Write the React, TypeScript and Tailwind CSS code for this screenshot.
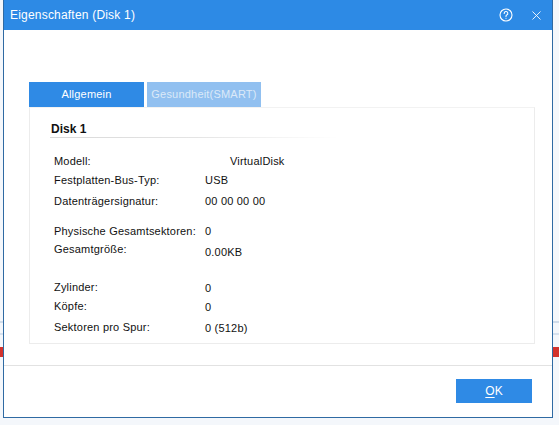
import { X } from 'lucide-react';

interface Field {
  label: string;
  value: string;
  gapBefore?: string;
  valueClass?: string;
}

const fields: Field[] = [
  { label: 'Modell:', value: 'VirtualDisk', valueClass: 'pl-[25px]' },
  { label: 'Festplatten-Bus-Typ:', value: 'USB' },
  { label: 'Datenträgersignatur:', value: '00 00 00 00', gapBefore: 'mt-[2px]' },
  { label: 'Physische Gesamtsektoren:', value: '0', gapBefore: 'mt-[11px]' },
  { label: 'Gesamtgröße:', value: '0.00KB', gapBefore: 'mt-[-1px]', valueClass: 'translate-y-[3px]' },
  { label: 'Zylinder:', value: '0', gapBefore: 'mt-[19px]', valueClass: 'translate-y-[1px]' },
  { label: 'Köpfe:', value: '0', valueClass: 'translate-y-[1px]' },
  { label: 'Sektoren pro Spur:', value: '0 (512b)', gapBefore: 'mt-[2px]', valueClass: 'translate-y-[1px]' },
];

function HelpIcon() {
  return (
    <svg width="14" height="14" viewBox="0 0 14 14" fill="none" stroke="white" strokeWidth="1.1">
      <circle cx="7" cy="7" r="6" />
      <path d="M5.2 5.4a1.8 1.8 0 1 1 2.5 1.6c-.5.25-.7.6-.7 1.1v.5" strokeLinecap="round" />
      <circle cx="7" cy="10.2" r="0.55" fill="white" stroke="none" />
    </svg>
  );
}

function SideStrip({ width }: { width: string }) {
  return (
    <div className={`${width} h-[425px] flex flex-col bg-[#f4f7fb]`}>
      <div className="h-[321px]" />
      <div className="h-[2px] bg-[#cfdbe9]" />
      <div className="h-[10px]" />
      <div className="h-[2px] bg-[#d6e1ee]" />
      <div className="h-[12px]" />
      <div className="h-[10px] bg-[#d3322c]" />
      <div className="flex-1" />
    </div>
  );
}

export default function App() {
  return (
    <div className="w-[559px] h-[425px] flex bg-[#f4f7fb] overflow-hidden" style={{ fontFamily: '"Liberation Sans", Arial, sans-serif' }}>
      <SideStrip width="w-[3px]" />
      <div className="w-[550px] h-[418px] flex flex-col bg-white border-x border-b border-[#2f6aa3]">
        {/* title bar */}
        <div className="h-[30px] bg-[#2d8ae5] flex items-center pl-[6px] pr-[8px]">
          <span className="text-white text-[12px] tracking-[0.2px]">Eigenschaften (Disk 1)</span>
          <div className="ml-auto flex items-center gap-[16px]">
            <HelpIcon />
            <X size={15} color="white" strokeWidth={1.4} />
          </div>
        </div>

        <div className="flex-1 flex flex-col pl-[25px] pr-[17px] pt-[52px]">
          {/* tabs */}
          <div className="flex gap-[3px] h-[25px] text-[11px] tracking-[0.2px]">
            <div className="w-[115px] bg-[#2f8ae5] text-white flex items-center justify-center">Allgemein</div>
            <div className="w-[114px] bg-[#91c0f0] text-[#dbe9f8] flex items-center justify-center">Gesundheit(SMART)</div>
          </div>

          {/* general panel */}
          <div className="h-[237px] border border-[#ececec] border-t-[#f2f2f2] pl-[20px] pt-[13px]">
            <div className="text-[12px] font-bold text-[#111] leading-[16px] pl-[1px]">Disk 1</div>
            <div className="h-[1px] w-[288px] bg-gradient-to-r from-[#d9d9d9] via-[#e4e4e4] to-transparent" />
            <div className="pt-[14px] pl-[4px] flex flex-col text-[11px] tracking-[0.2px] text-[#111] leading-[19px]">
              {fields.map((f) => (
                <div key={f.label} className={`flex ${f.gapBefore ?? ''}`}>
                  <span className="w-[151px]">{f.label}</span>
                  <span className={f.valueClass ?? ''}>{f.value}</span>
                </div>
              ))}
            </div>
          </div>
        </div>

        {/* footer */}
        <div className="h-[52px] border-t border-[#e2e2e2] flex items-start justify-end pr-[20px] pt-[13px]">
          <button className="w-[76px] h-[24px] bg-[#2f8ae5] text-white text-[12px]">
            <span className="underline underline-offset-2">O</span>K
          </button>
        </div>
      </div>
      <SideStrip width="w-[6px]" />
    </div>
  );
}
